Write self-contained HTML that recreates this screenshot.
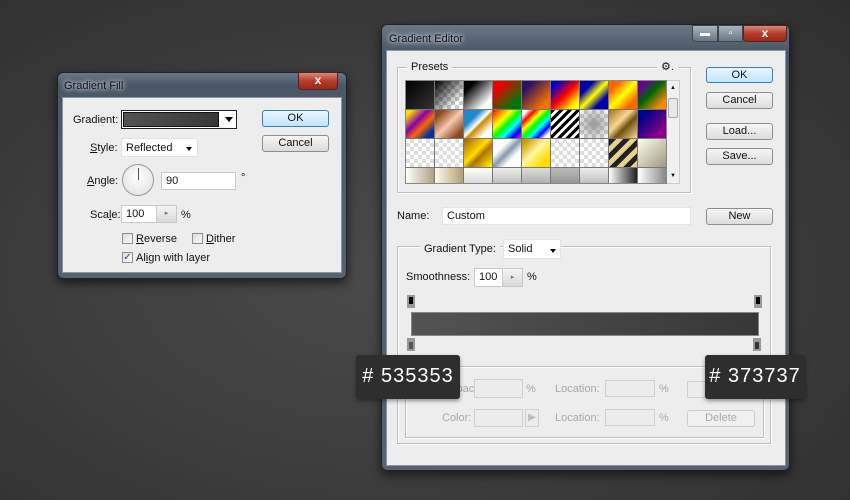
<!DOCTYPE html>
<html><head><meta charset="utf-8"><style>
*{margin:0;padding:0;box-sizing:border-box}
body{width:850px;height:500px;overflow:hidden;background:radial-gradient(ellipse at 45% 55%,#4a4a4a 0%,#3c3c3c 55%,#2e2e2e 100%);font-family:"Liberation Sans",sans-serif;font-size:11px;color:#111;position:relative}
.a{position:absolute}
.win{position:absolute;border-radius:6px;background:linear-gradient(180deg,#6a7886 0%,#4a5866 6%,#56636f 100%);border:1px solid #1c232a;box-shadow:0 4px 10px rgba(0,0,0,.6)}
.title{position:absolute;color:#111;font-size:11px;text-shadow:0 0 4px #dde,0 0 6px #cfd8e0}
.client{position:absolute;background:#ededed;border:1px solid #8a95a0}
.btn{position:absolute;border:1px solid #8e8e8e;border-radius:3px;background:linear-gradient(#f6f6f6,#dcdcdc);text-align:center;font-size:11px;line-height:15px}
.btn.ok{border-color:#3c7fb1;background:linear-gradient(#eaf6fd,#bee6fd)}
.inp{position:absolute;background:#fff;border:1px solid #c8c8c8;padding-left:4px;line-height:16px}
.close{position:absolute;border:1px solid #5a2020;border-radius:0 0 4px 4px;background:linear-gradient(#d88a7a,#b83a2a 50%,#9a2a1a);color:#fff;text-align:center;font-weight:bold;font-size:12px;line-height:15px}
.tb{position:absolute;border:1px solid #3a4550;background:linear-gradient(#a8b4c0,#6a7784);color:#fff;text-align:center;font-size:10px;line-height:15px}
.grp{position:absolute;border:1px solid #bdbdbd;box-shadow:inset 1px 1px 0 #fff,1px 1px 0 #fff}
.lbl{position:absolute;background:#ededed;padding:0 4px}
.cb{position:absolute;width:11px;height:11px;border:1px solid #8e8f8f;background:linear-gradient(135deg,#dcdcdc,#fafafa)}
.grid{position:absolute;left:405px;top:80px;width:262px;height:104px;display:grid;grid-template-columns:repeat(9,29px);grid-auto-rows:29px;overflow:hidden;border:1px solid #888}
.grid div{border-right:1px solid #777;border-bottom:1px solid #777}
.ck{background:repeating-conic-gradient(#ddd 0 25%,#fff 0 50%) 0 0/8px 8px}
.tag{position:absolute;background:#2e2e2e;color:#fff;border-radius:3px;font-size:20px;line-height:43px;text-align:center;letter-spacing:1px;box-shadow:0 2px 4px rgba(0,0,0,.4)}
.dis{color:#a8a8a8}
.dinp{position:absolute;border:1px solid #cfcfcf;background:#ececec}
.stop{position:absolute;width:8px;height:13px}
</style></head><body>

<div class="win" style="left:57px;top:72px;width:290px;height:207px"></div>
<div class="title" style="left:64px;top:80px">Gradient Fill</div>
<div class="close" style="left:298px;top:72px;width:40px;height:18px">x</div>
<div class="client" style="left:62px;top:97px;width:280px;height:176px"></div>
<div class="a" style="left:73px;top:114px">Gradient:</div>
<div class="a" style="left:121px;top:110px;width:116px;height:19px;border:1px solid #222;background:#fff"><div class="a" style="left:1px;top:1px;width:96px;height:15px;background:linear-gradient(90deg,#535353,#373737);border:1px solid #111"></div><div class="a" style="right:3px;top:6px;border-left:4px solid transparent;border-right:4px solid transparent;border-top:5px solid #000"></div></div>
<div class="btn ok" style="left:262px;top:110px;width:67px;height:17px">OK</div>
<div class="btn" style="left:262px;top:135px;width:67px;height:17px">Cancel</div>
<div class="a" style="left:90px;top:142px"><u>S</u>tyle:</div>
<div class="inp" style="left:121px;top:138px;width:77px;height:19px;border-color:#e0e0e0;line-height:18px">Reflected<span class="a" style="right:5px;top:8px;border-left:3px solid transparent;border-right:3px solid transparent;border-top:4px solid #000"></span></div>
<div class="a" style="left:87px;top:175px"><u>A</u>ngle:</div>
<div class="a" style="left:122px;top:164px;width:32px;height:32px;border-radius:50%;border:1px solid #999;background:radial-gradient(circle at 50% 40%,#fff,#ddd)"><div class="a" style="left:15px;top:3px;width:1px;height:12px;background:#555"></div></div>
<div class="inp" style="left:161px;top:172px;width:75px;height:18px;line-height:17px">90</div>
<div class="a" style="left:241px;top:172px">°</div>
<div class="a" style="left:90px;top:209px">Sca<u>l</u>e:</div>
<div class="inp" style="left:121px;top:205px;width:56px;height:18px;line-height:17px">100<span class="a" style="left:34px;top:0;width:20px;height:16px;background:linear-gradient(#f4f4f4,#dadada);border-left:1px solid #ccc;color:#4a7ab0;font-size:7px;text-align:center;line-height:16px">▸</span></div>
<div class="a" style="left:181px;top:209px">%</div>
<div class="cb" style="left:122px;top:233px"></div><div class="a" style="left:136px;top:233px"><u>R</u>everse</div>
<div class="cb" style="left:192px;top:233px"></div><div class="a" style="left:206px;top:233px"><u>D</u>ither</div>
<div class="cb" style="left:122px;top:252px;font-size:10px;line-height:9px;color:#2a4a8a;text-align:center">✓</div><div class="a" style="left:136px;top:252px">Al<u>i</u>gn with layer</div>

<div class="win" style="left:381px;top:24px;width:409px;height:447px"></div>
<div class="title" style="left:389px;top:33px">Gradient Editor</div>
<div class="tb" style="left:692px;top:25px;width:26px;height:17px;border-radius:0 0 0 4px">▬</div>
<div class="tb" style="left:718px;top:25px;width:25px;height:17px">▫</div>
<div class="close" style="left:743px;top:25px;width:44px;height:17px">x</div>
<div class="client" style="left:386px;top:50px;width:400px;height:416px"></div>

<div class="grp" style="left:397px;top:67px;width:294px;height:126px"></div>
<div class="lbl" style="left:407px;top:61px;font-size:11px">Presets</div>
<div class="lbl" style="left:657px;top:60px">⚙.</div>
<div class="grid">
<div style="background:linear-gradient(135deg,#000,#333)"></div>
<div style="background:linear-gradient(135deg,#000 0%,rgba(0,0,0,0) 80%),repeating-conic-gradient(#ccc 0 25%,#fff 0 50%) 0 0/8px 8px"></div>
<div style="background:linear-gradient(135deg,#000 20%,#fff 80%)"></div>
<div style="background:linear-gradient(135deg,#e00 20%,#070 80%)"></div>
<div style="background:linear-gradient(135deg,#301060 20%,#f07000 80%)"></div>
<div style="background:linear-gradient(135deg,#00c 15%,#f00 50%,#ff0 85%)"></div>
<div style="background:linear-gradient(135deg,#00a 25%,#ff0 50%,#00a 75%)"></div>
<div style="background:linear-gradient(135deg,#f60 20%,#ff0 50%,#f60 80%)"></div>
<div style="background:linear-gradient(135deg,#609 15%,#060 45%,#f80 85%)"></div>
<div style="background:linear-gradient(135deg,#fd0 10%,#80a 40%,#f60 60%,#039 85%)"></div>
<div style="background:linear-gradient(135deg,#8a4a20 15%,#f8c8b0 50%,#8a4a20 85%)"></div>
<div style="background:linear-gradient(135deg,#28c 30%,#fff 48%,#c80 55%,#fff 80%)"></div>
<div style="background:linear-gradient(135deg,#f00,#f80,#ff0,#0f0,#0ff,#00f,#f0f)"></div>
<div style="background:linear-gradient(135deg,#fff 10%,#f00,#ff0,#0f0,#0ff,#00f,#fff 90%)"></div>
<div style="background:repeating-linear-gradient(135deg,#000 0 3px,#fff 3px 6px)"></div>
<div style="background:radial-gradient(#999,rgba(255,255,255,0)),repeating-conic-gradient(#ccc 0 25%,#fff 0 50%) 0 0/8px 8px"></div>
<div style="background:linear-gradient(135deg,#a07020,#f8d890 40%,#705010 60%,#f8d890)"></div>
<div style="background:linear-gradient(135deg,#008 20%,#808 80%)"></div>
<div class="ck"></div><div class="ck"></div>
<div style="background:linear-gradient(135deg,#a06000,#fd0 45%,#b07000 60%,#ff0)"></div>
<div style="background:linear-gradient(135deg,#fff 30%,#89a 50%,#fff 70%)"></div>
<div style="background:linear-gradient(135deg,#c90 10%,#fff8a0 45%,#fd0 80%)"></div>
<div class="ck"></div><div class="ck"></div>
<div style="background:repeating-linear-gradient(135deg,#222 0 5px,#e8d090 5px 10px)"></div>
<div style="background:linear-gradient(135deg,#fffef0,#a09880)"></div>
<div style="background:linear-gradient(90deg,#fff,#b0a080)"></div>
<div style="background:linear-gradient(90deg,#fffaf0,#b0a070)"></div>
<div style="background:linear-gradient(#fff,#bbb)"></div>
<div style="background:linear-gradient(#eee,#999)"></div>
<div style="background:linear-gradient(#ddd,#888)"></div>
<div style="background:linear-gradient(#bbb,#777)"></div>
<div style="background:linear-gradient(#eee,#999)"></div>
<div style="background:linear-gradient(90deg,#fff,#222)"></div>
<div style="background:linear-gradient(90deg,#fff,#888)"></div>
</div>
<div class="a" style="left:667px;top:80px;width:13px;height:104px;background:#f0f0f0;border:1px solid #ccc;border-left:none"><div class="a" style="left:1px;top:17px;width:10px;height:20px;border:1px solid #aaa;border-radius:2px;background:#e8e8e8"></div><div class="a" style="left:3px;top:4px;font-size:6px">▲</div><div class="a" style="left:3px;bottom:4px;font-size:6px">▼</div></div>

<div class="btn ok" style="left:706px;top:67px;width:67px;height:16px">OK</div>
<div class="btn" style="left:706px;top:92px;width:67px;height:17px">Cancel</div>
<div class="btn" style="left:706px;top:123px;width:67px;height:17px">Load...</div>
<div class="btn" style="left:706px;top:148px;width:67px;height:17px">Save...</div>

<div class="a" style="left:397px;top:210px">Name:</div>
<div class="inp" style="left:442px;top:207px;width:249px;height:18px;border-color:#e2e2e2;line-height:17px">Custom</div>
<div class="btn" style="left:706px;top:208px;width:67px;height:17px">New</div>

<div class="grp" style="left:397px;top:246px;width:374px;height:198px"></div>
<div class="lbl" style="left:420px;top:243px">Gradient Type:</div>
<div class="inp" style="left:503px;top:239px;width:58px;height:20px;border-color:#e4e4e4;line-height:19px">Solid<span class="a" style="right:4px;top:9px;border-left:3px solid transparent;border-right:3px solid transparent;border-top:4px solid #000"></span></div>
<div class="a" style="left:406px;top:271px">Smoothness:</div>
<div class="inp" style="left:474px;top:268px;width:49px;height:19px;line-height:17px">100<span class="a" style="left:27px;top:0;width:20px;height:17px;background:linear-gradient(#f4f4f4,#dadada);border-left:1px solid #ccc;color:#4a7ab0;font-size:7px;text-align:center">▸</span></div>
<div class="a" style="left:527px;top:271px">%</div>

<div class="stop" style="left:407px;top:295px;background:#000;border:2px solid #999;border-bottom-width:4px"></div>
<div class="stop" style="left:754px;top:295px;background:#000;border:2px solid #999;border-bottom-width:4px"></div>
<div class="a" style="left:411px;top:312px;width:348px;height:24px;background:linear-gradient(90deg,#535353,#373737);border:1px solid #888"></div>
<div class="stop" style="left:407px;top:338px;background:#555;border:2px solid #999;border-top-width:4px"></div>
<div class="stop" style="left:753px;top:338px;background:#373737;border:2px solid #999;border-top-width:4px"></div>

<div class="grp" style="left:405px;top:366px;width:359px;height:72px"></div>
<div class="a dis" style="left:448px;top:383px">Opacity:</div>
<div class="dinp" style="left:474px;top:379px;width:49px;height:19px"></div>
<div class="a dis" style="left:526px;top:383px">%</div>
<div class="a dis" style="left:555px;top:383px">Location:</div>
<div class="dinp" style="left:605px;top:380px;width:50px;height:17px"></div>
<div class="a dis" style="left:659px;top:383px">%</div>
<div class="dinp" style="left:687px;top:381px;width:68px;height:17px"></div>
<div class="a dis" style="left:442px;top:412px">Color:</div>
<div class="dinp" style="left:474px;top:409px;width:49px;height:18px"></div>
<div class="dinp" style="left:525px;top:409px;width:14px;height:18px;color:#bbb;font-size:10px;text-align:center;line-height:16px">▶</div>
<div class="a dis" style="left:555px;top:412px">Location:</div>
<div class="dinp" style="left:605px;top:409px;width:50px;height:17px"></div>
<div class="a dis" style="left:659px;top:412px">%</div>
<div class="btn dis" style="left:687px;top:410px;width:68px;height:17px;border-color:#ccc;background:#f0f0f0">Delete</div>

<div class="tag" style="left:356px;top:355px;width:104px;height:44px"># 535353</div>
<div class="tag" style="left:705px;top:355px;width:100px;height:44px"># 373737</div>
</body></html>
